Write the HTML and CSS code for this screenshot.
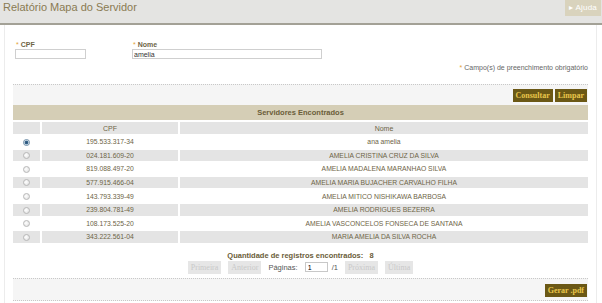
FILE: index.html
```html
<!DOCTYPE html>
<html lang="pt-BR">
<head>
  <meta charset="UTF-8" />
  <title>Relatório Mapa do Servidor</title>
  <link rel="stylesheet" href="styles.css">
</head>
<body>
  <div class="header">
    <div class="title">Relatório Mapa do Servidor</div>
    <a class="help" href="#">&#9656; Ajuda</a>
  </div>

  <div class="panel">
    <div class="form-row">
      <div class="field">
        <label><span class="req">*</span> CPF</label>
        <input class="cpf-input" type="text" value="">
      </div>
      <div class="field">
        <label><span class="req">*</span> Nome</label>
        <input class="name-input" type="text" value="amelia">
      </div>
    </div>
    <p class="note"><span class="req">*</span> Campo(s) de preenchimento obrigatório</p>

    <div class="actions">
      <button class="btn">Consultar</button>
      <button class="btn">Limpar</button>
    </div>

    <div class="table-title">Servidores Encontrados</div>
    <table class="results">
      <thead>
        <tr>
          <th class="col-radio"></th>
          <th class="col-cpf">CPF</th>
          <th>Nome</th>
        </tr>
      </thead>
      <tbody>
        <tr><td class="col-radio"><span class="radio checked"></span></td><td>195.533.317-34</td><td>ana amelia</td></tr>
        <tr class="alt"><td class="col-radio"><span class="radio"></span></td><td>024.181.609-20</td><td>AMELIA CRISTINA CRUZ DA SILVA</td></tr>
        <tr><td class="col-radio"><span class="radio"></span></td><td>819.088.497-20</td><td>AMELIA MADALENA MARANHAO SILVA</td></tr>
        <tr class="alt"><td class="col-radio"><span class="radio"></span></td><td>577.915.466-04</td><td>AMELIA MARIA BUJACHER CARVALHO FILHA</td></tr>
        <tr><td class="col-radio"><span class="radio"></span></td><td>143.793.339-49</td><td>AMELIA MITICO NISHIKAWA BARBOSA</td></tr>
        <tr class="alt"><td class="col-radio"><span class="radio"></span></td><td>239.804.781-49</td><td>AMELIA RODRIGUES BEZERRA</td></tr>
        <tr><td class="col-radio"><span class="radio"></span></td><td>108.173.525-20</td><td>AMELIA VASCONCELOS FONSECA DE SANTANA</td></tr>
        <tr class="alt"><td class="col-radio"><span class="radio"></span></td><td>343.222.561-04</td><td>MARIA AMELIA DA SILVA ROCHA</td></tr>
      </tbody>
    </table>

    <p class="count">Quantidade de registros encontrados:&nbsp;&nbsp; 8</p>
    <div class="pager">
      <button class="btn disabled">Primeira</button>
      <button class="btn disabled">Anterior</button>
      <span>Páginas:</span>
      <input class="page-input" type="text" value="1">
      <span>/1</span>
      <button class="btn disabled">Próxima</button>
      <button class="btn disabled">Última</button>
    </div>

    <div class="actions bottom">
      <button class="btn">Gerar .pdf</button>
    </div>
  </div>
</body>
</html>
```

FILE: styles.css
```css
body {
  margin: 0;
  padding: 0;
  background-color: white;
  font-family: 'Liberation Sans', Arial, sans-serif;
  font-size: 7px;
  color: #6e6446;
}

.header {
  display: flex;
  justify-content: space-between;
  align-items: flex-start;
  height: 23px;
  background-color: #e4e4e2;
  border-bottom: 2px solid #a3a196;
}

.title {
  font-size: 11px;
  color: #8a7b52;
  padding: 1px 0 0 3px;
}

.help {
  display: block;
  background-color: #d9d3bd;
  color: white;
  text-decoration: none;
  font-size: 8px;
  padding: 3px 4px;
  margin-right: 1px;
  height: 10px;
  line-height: 10px;
  letter-spacing: 0.2px;
}

.panel {
  box-sizing: border-box;
  margin: 0 5px 0 4px;
  padding: 15px 8px 0 8px;
  border-left: 1px solid #ececec;
  border-right: 1px solid #ececec;
  height: 278px;
}

.form-row {
  display: flex;
  gap: 46px;
  padding-left: 2px;
}

.field label {
  display: block;
  font-weight: bold;
  color: #6e6446;
  padding-left: 1px;
  height: 9px;
  line-height: 9px;
}

.req {
  color: #e3a23a;
  font-weight: normal;
}

.field input {
  display: block;
  box-sizing: border-box;
  height: 10px;
  border: 1px solid #cfcfcf;
  font-family: 'Liberation Sans', Arial, sans-serif;
  font-size: 7px;
  padding: 0 1px;
  color: #333;
  margin: 0;
}

.cpf-input {
  width: 71px;
}

.name-input {
  width: 190px;
}

.note {
  margin: 4px 0 0 0;
  text-align: right;
  color: #666;
  line-height: 9px;
}

.actions {
  display: flex;
  justify-content: flex-end;
  gap: 2px;
  margin-top: 12px;
  padding: 4px 1px 3px 0;
  background-color: #f5f5f5;
  border-top: 1px dotted #c8c8c8;
}

.btn {
  font-family: 'Liberation Serif', 'Times New Roman', serif;
  font-weight: bold;
  font-size: 8px;
  color: #e9c64b;
  background-color: #6b5815;
  border: none;
  padding: 0 3px;
  height: 13px;
  line-height: 13px;
}

.btn.disabled {
  background-color: #e6e6e6;
  color: #c9c9c9;
  font-weight: normal;
}

.table-title {
  background-color: #d5ceb6;
  text-align: center;
  font-weight: bold;
  font-size: 7.5px;
  height: 15px;
  line-height: 15px;
  color: #6a5d39;
}

.results {
  border-collapse: separate;
  border-spacing: 2px;
  margin: 0 -2px;
  width: calc(100% + 4px);
}

.results th {
  background-color: #e4e4e4;
  font-weight: normal;
  color: #6e6446;
  height: 12px;
  padding: 0;
}

.results td {
  text-align: center;
  height: 11.6px;
  padding: 0;
  font-size: 6.8px;
  color: #6e6446;
}

.results tr.alt td {
  background-color: #e4e4e4;
}

.col-radio {
  width: 27px;
}

.col-cpf {
  width: 136px;
}

.radio {
  display: inline-block;
  width: 5px;
  height: 5px;
  border-radius: 50%;
  border: 1px solid #b8b8b8;
  background: radial-gradient(circle at 40% 40%, #ffffff, #dcdcdc);
  vertical-align: middle;
}

.radio.checked {
  border-color: #6f8ea8;
  background: radial-gradient(circle, #2b4f72 0, #3a6a92 1.6px, #dfe8ef 2.2px);
}

.count {
  margin: 6px 0 0 0;
  text-align: center;
  font-weight: bold;
  font-size: 7.5px;
  color: #6a5d39;
  line-height: 9px;
}

.pager {
  display: flex;
  justify-content: center;
  align-items: center;
  gap: 7px;
  margin-top: 1px;
  color: #555;
  font-size: 7.5px;
}

.page-input {
  box-sizing: border-box;
  width: 23px;
  height: 10px;
  border: 1px solid #c8c8c8;
  font-family: 'Liberation Sans', Arial, sans-serif;
  font-size: 7px;
  padding: 0 2px;
  margin: 0 -3px 0 0;
}

.actions.bottom {
  margin-top: 4px;
  padding: 5px 1px 3px 0;
  border-bottom: 1px dotted #c8c8c8;
}
```
